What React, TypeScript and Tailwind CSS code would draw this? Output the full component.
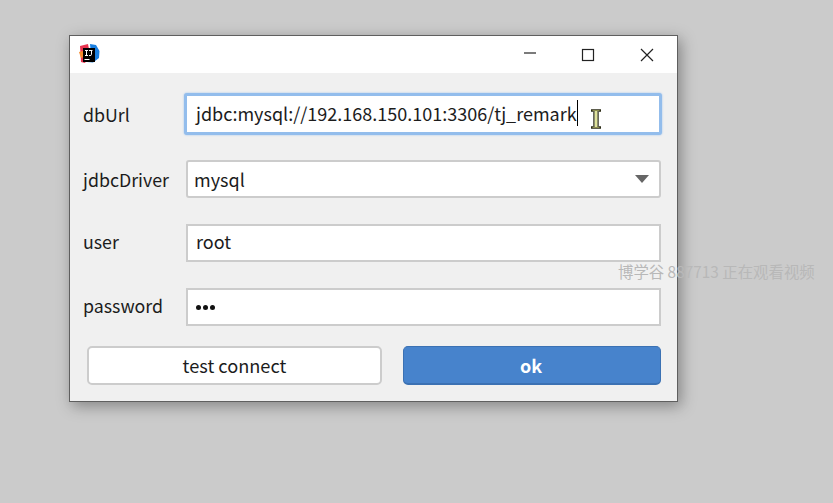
import React from "react";

const font = "font-['Noto_Sans_CJK_SC','Noto_Sans',sans-serif]";

function IdeaLogo() {
  return (
    <svg width="21" height="21" viewBox="0 0 21 21">
      <path d="M1 2 L9 0 L11 10 L6 19 L2 18 Z" fill="#e8344f" />
      <path d="M0 8 L4 7 L5 13 L2 14 Z" fill="#f58a2c" />
      <path d="M11 0 L17 1 L20.5 7 L20 14 L14 18.5 L8 18 L12 10 Z" fill="#1a7fe0" />
      <rect x="4" y="4" width="12" height="14" fill="#000" />
      <rect x="5.5" y="15" width="5" height="1" fill="#fff" />
      <path d="M6 6.5 H9 M7.5 6.5 V11.5 M6 11.5 H9 M10 6.5 H13.5 M12.5 6.5 V10.5 Q12.5 11.5 11 11.5 H10" stroke="#fff" strokeWidth="1" fill="none" />
    </svg>
  );
}

function Row({ label, children, className, labelClass }: { label: string; children: React.ReactNode; className?: string; labelClass?: string }) {
  return (
    <div className={`flex items-center ${className ?? ""}`}>
      <div className={`w-[103px] shrink-0 text-[17.8px] leading-[26px] text-[#1c1c1c] ${labelClass ?? ""}`}>{label}</div>
      {children}
    </div>
  );
}

export default function App() {
  return (
    <div className={`relative h-[503px] w-[833px] overflow-hidden bg-[#cbcbcb] pl-[69px] pt-[35px] ${font}`}>
      {/* dialog */}
      <div className="h-[367px] w-[609px] border border-[#5f5f5f] bg-[#f0f0f0] shadow-[3px_4px_14px_rgba(0,0,0,0.35)]">
        {/* title bar */}
        <div className="flex h-[37px] items-center bg-white pl-[9px]">
          <IdeaLogo />
          <div className="ml-auto flex items-center">
            <svg width="16" height="16" viewBox="0 0 16 16" className="mb-[3px] mr-[43px]">
              <path d="M2 8 H14" stroke="#222" strokeWidth="1.2" />
            </svg>
            <svg width="14" height="14" viewBox="0 0 14 14" className="mr-[44px]">
              <rect x="1.5" y="1.5" width="11" height="11" fill="none" stroke="#222" strokeWidth="1.2" />
            </svg>
            <svg width="16" height="16" viewBox="0 0 16 16" className="mr-[22px]">
              <path d="M2 2 L14 14 M14 2 L2 14" stroke="#222" strokeWidth="1.2" />
            </svg>
          </div>
        </div>

        {/* form */}
        <div className="pl-[13px] pr-[16px]">
          <Row label="dbUrl" className="mt-[20px] h-[42px]">
            <div className="relative -mr-px ml-[-2px] flex h-[42px] flex-1 items-center rounded-[3px] border-[3px] border-[#93bdec] bg-white pb-[2px] pl-[9px] text-[18px] text-[#1c1c1c] shadow-[0_0_2px_#93bdec]">
              <span>jdbc:mysql://192.168.150.101:3306/tj_remark</span>
              <span className="h-[26px] w-px bg-black" />
              {/* mouse cursor */}
              <svg width="12" height="20" viewBox="0 0 12 20" className="absolute left-[403px] top-[13px]">
                <path d="M1 1.5 H11 M1 18.5 H11" stroke="#2a2a14" strokeWidth="2.4" fill="none" />
                <path d="M4 3 V17 M8 3 V17" stroke="#2a2a14" strokeWidth="1.4" />
                <path d="M6 2 V18" stroke="#dfe39a" strokeWidth="2.6" />
                <path d="M2.5 1.5 H9.5 M2.5 18.5 H9.5" stroke="#a8a860" strokeWidth="0.8" />
              </svg>
            </div>
          </Row>
          <Row label="jdbcDriver" className="mt-[25px] h-[38px]" labelClass="-mr-px">
            <div className="ml-px flex h-[38px] flex-1 items-center justify-between rounded-[3px] border-2 border-[#cccccc] bg-white pl-[6px] pr-[10px] text-[18px] text-[#1c1c1c]">
              <span>mysql</span>
              <svg width="14" height="8" viewBox="0 0 14 8">
                <path d="M0 0 H14 L7 8 Z" fill="#666" />
              </svg>
            </div>
          </Row>
          <Row label="user" className="mt-[26px] h-[38px]" labelClass="mb-[4px]">
            <div className="flex h-[38px] flex-1 items-center border-2 border-[#cccccc] bg-white pb-[4px] pl-[8px] text-[18px] text-[#1c1c1c]">root</div>
          </Row>
          <Row label="password" className="mt-[26px] h-[38px]" labelClass="mb-[4px]">
            <div className="flex h-[38px] flex-1 items-center gap-[2px] border-2 border-[#cccccc] bg-white pl-[8px]">
              <span className="size-[5px] rounded-full bg-[#111]" />
              <span className="size-[5px] rounded-full bg-[#111]" />
              <span className="size-[5px] rounded-full bg-[#111]" />
            </div>
          </Row>
          <div className="mt-[20px] flex h-[39px] pl-[4px]">
            <button className="h-full w-[295px] rounded-[5px] border-2 border-[#cccccc] bg-white text-[18.2px] text-[#1c1c1c]">test connect</button>
            <button className="ml-[21px] h-full w-[258px] rounded-[5px] border border-b-2 border-[#3b71b3] bg-[#4783cc] pr-[2px] text-[18px] font-bold text-white">ok</button>
          </div>
        </div>
      </div>

      {/* watermark */}
      <div className="absolute left-[618px] top-[261px] whitespace-nowrap text-[15.4px] leading-[20px] text-[#b8b8b8]">博学谷 887713 正在观看视频</div>
    </div>
  );
}
